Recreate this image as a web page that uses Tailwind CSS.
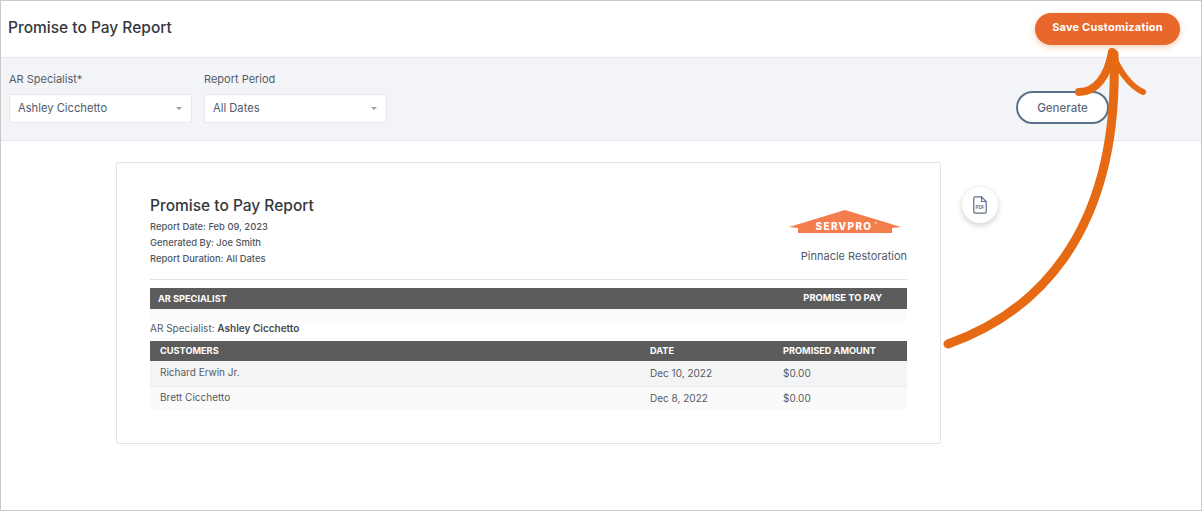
<!doctype html>
<html>
  <head>
    <meta charset="utf-8" />
    <script src="https://cdn.jsdelivr.net/npm/@tailwindcss/browser@4"></script>
    <title>Promise to Pay Report</title>
  </head>
  <body class="bg-white">
    <div class="relative w-[1202px] h-[511px] overflow-hidden border border-[#c9c9c9] font-['Inter',sans-serif] text-[#4a5568]">
      <!-- Page header -->
      <div class="h-[56px] flex items-center justify-between pl-[7px] pr-[21px]">
        <h1 class="text-[15.5px] leading-[50px] h-[52px] font-medium text-[#33383f]">Promise to Pay Report</h1>
        <button class="mb-[1px] w-[145px] h-[32px] pb-[2px] rounded-full bg-[#e8672a] text-white text-[11px] font-bold tracking-[0.2px] shadow-[0_2px_6px_rgba(232,103,42,0.35)]">Save Customization</button>
      </div>

      <!-- Filters -->
      <div class="h-[84px] bg-[#f3f4f8] border-y border-[#e3e5ea] flex justify-between pl-[8px] pr-[92px]">
        <div class="flex gap-[12px]">
          <div class="w-[183px]">
            <div class="text-[11px] leading-[16px] mt-[13px] mb-[7px] text-[#555c66]">AR Specialist*</div>
            <div class="h-[29px] bg-white border border-[#e6e7eb] rounded-[3px] flex items-center justify-between pl-[8px] pr-[9px]">
              <span class="text-[11.2px] text-[#4f5a6b]">Ashley Cicchetto</span>
              <span class="w-0 h-0 border-x-[3px] border-x-transparent border-t-[3px] border-t-[#9a9ea6]"></span>
            </div>
          </div>
          <div class="w-[183px]">
            <div class="text-[11px] leading-[16px] mt-[13px] mb-[7px] text-[#555c66]">Report Period</div>
            <div class="h-[29px] bg-white border border-[#e6e7eb] rounded-[3px] flex items-center justify-between pl-[8px] pr-[9px]">
              <span class="text-[11.2px] text-[#4f5a6b]">All Dates</span>
              <span class="w-0 h-0 border-x-[3px] border-x-transparent border-t-[3px] border-t-[#9a9ea6]"></span>
            </div>
          </div>
        </div>
        <button class="mt-[33px] w-[93px] h-[33px] pt-[2px] bg-white rounded-full border-2 border-[#5c6f89] text-[11.5px] font-medium text-[#5c6b80]">Generate</button>
      </div>

      <!-- Report card -->
      <div class="flex items-start pl-[115px] pt-[21px]">
        <div class="w-[825px] h-[282px] bg-white border border-[#e4e4e4] rounded-[2px] px-[33px] pt-[32px]">
          <div class="flex justify-between h-[83px]">
            <div>
              <h2 class="text-[15.5px] leading-[22px] font-medium text-[#33383f]">Promise to Pay Report</h2>
              <p class="text-[9.4px] leading-[16px] mt-[2px] font-medium text-[#4f5560]">Report Date: Feb 09, 2023</p>
              <p class="text-[9.4px] leading-[16px] font-medium text-[#4f5560]">Generated By: Joe Smith</p>
              <p class="text-[9.4px] leading-[16px] font-medium text-[#4f5560]">Report Duration: All Dates</p>
            </div>
            <div class="flex flex-col items-end">
              <svg class="mt-[15px] mr-[5px]" width="114" height="23" viewBox="0 0 114 23">
                <path d="M57 0 L113 17 L104 18 L104 23 L10 23 L10 18 L1 17 Z" fill="#f47d4e" />
                <text x="56" y="20" text-anchor="middle" fill="#fff" font-size="10" font-weight="800" letter-spacing="1.3" font-family="Inter, sans-serif">SERVPRO</text>
                <text x="87" y="15" fill="#fff" font-size="3" font-family="Inter, sans-serif">®</text>
              </svg>
              <div class="text-[11px] leading-[14px] mt-[16px] text-[#4f5a6b]">Pinnacle Restoration</div>
            </div>
          </div>

          <div class="border-t border-[#e2e2e2] mt-[1px] pt-[8px]">
            <div class="h-[21px] bg-[#5c5c5c] flex items-center justify-between pl-[8px] pr-[25px] text-[9.2px] font-bold text-white">
              <span>AR SPECIALIST</span>
              <span class="text-[9.4px]">PROMISE TO PAY</span>
            </div>
            <div class="h-[13px] bg-[#fbfbfb]"></div>
            <p class="text-[10px] leading-[13px] text-[#4f5a6b]">AR Specialist: <span class="font-semibold text-[#434a55]">Ashley Cicchetto</span></p>
            <div class="mt-[6px] h-[20px] bg-[#5c5c5c] grid grid-cols-[490px_133px_1fr] items-center pl-[10px] text-[9.2px] font-bold text-white">
              <span>CUSTOMERS</span>
              <span>DATE</span>
              <span>PROMISED AMOUNT</span>
            </div>
            <div class="h-[26px] bg-[#f3f4f6] border-b border-[#e6e8ee] grid grid-cols-[490px_133px_1fr] items-center pl-[10px] text-[10px] text-[#555a63]">
              <span class="pb-[3px]">Richard Erwin Jr.</span>
              <span class="pb-[1px]">Dec 10, 2022</span>
              <span class="pb-[1px]">$0.00</span>
            </div>
            <div class="h-[23px] bg-[#fafafa] grid grid-cols-[490px_133px_1fr] items-center pl-[10px] text-[10px] text-[#555a63]">
              <span class="pb-[2px]">Brett Cicchetto</span>
              <span class="pb-[1px]">Dec 8, 2022</span>
              <span class="pb-[1px]">$0.00</span>
            </div>
          </div>
        </div>

        <!-- PDF button -->
        <div class="ml-[21px] mt-[25px] w-[36px] h-[36px] rounded-full bg-white shadow-[0_2px_6px_rgba(0,0,0,0.2)] flex items-center justify-center">
          <svg width="14" height="18" viewBox="0 0 14 18" fill="none" stroke="#5c6f89" stroke-width="1.2">
            <path d="M2 .8 H8.5 L13.2 5.5 V15.5 A1.7 1.7 0 0 1 11.5 17.2 H2.5 A1.7 1.7 0 0 1 .8 15.5 V2 A1.2 1.2 0 0 1 2 .8 Z" />
            <path d="M8.5 .8 V5.5 H13.2" />
            <text x="7" y="13" text-anchor="middle" font-size="4.5" font-weight="700" fill="#5c6f89" stroke="none" font-family="Inter, sans-serif">PDF</text>
          </svg>
        </div>
      </div>

      <!-- Annotation arrow -->
      <svg class="absolute left-[-1px] top-[-1px] pointer-events-none" width="1202" height="511" viewBox="0 0 1202 511" fill="none" stroke="#e66a14" stroke-linecap="round">
        <path d="M948 344 C1030 315 1120 240 1114 54" stroke-width="9" />
        <path d="M1079 92 C1096 92 1108 76 1112 52" stroke-width="8" />
        <path d="M1112 52 C1118 70 1130 86 1143 92" stroke-width="6" />
      </svg>
    </div>
  </body>
</html>
